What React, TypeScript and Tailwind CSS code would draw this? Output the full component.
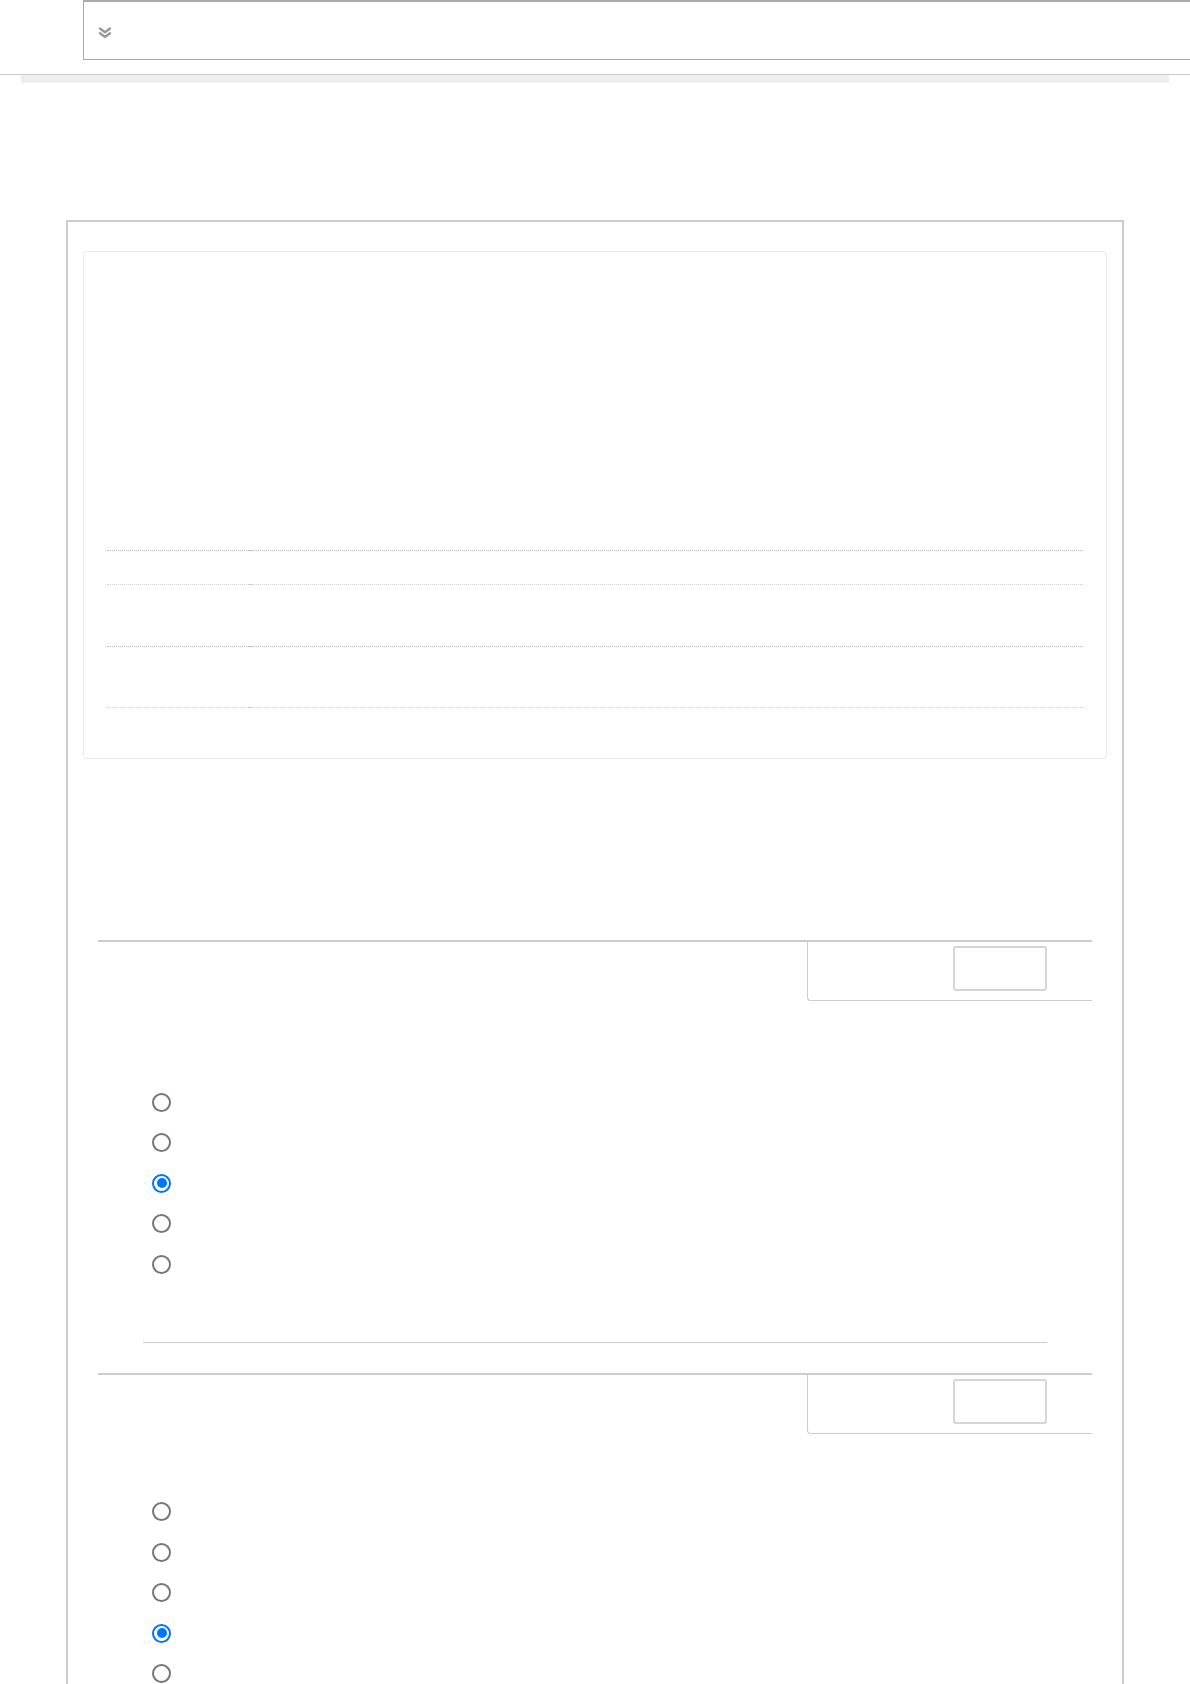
import React from "react";

function Radio({ checked }: { checked?: boolean }) {
  return (
    <div className="h-[40.5px] flex items-center">
      {checked ? (
        <div className="w-[19px] h-[19px] rounded-full border-2 border-[#0075ff] flex items-center justify-center bg-white">
          <div className="w-[10px] h-[10px] rounded-full bg-[#0075ff]" />
        </div>
      ) : (
        <div className="w-[19px] h-[19px] rounded-full border-2 border-[#767676] bg-white" />
      )}
    </div>
  );
}

function SectionHeader() {
  return (
    <div className="flex h-[61px]">
      <div className="flex-1 border-t-2 border-[#cccccc]" />
      <div className="w-[285px] border-t-2 border-l border-b border-[#cccccc] rounded-bl-[4px] pl-[145px] pt-[4px]">
        <div className="w-[94px] h-[45px] border-2 border-[#d6d6d6] rounded-[3px] bg-white" />
      </div>
    </div>
  );
}

function DottedRow({ h, dark }: { h: number; dark?: boolean }) {
  const c = dark ? "border-[#b8b8b8]" : "border-[#cdcdcd]";
  return (
    <div className="flex" style={{ height: h }}>
      <div className={`w-[142px] border-b border-dotted ${c}`} />
      <div className={`w-[2px] border-b ${c}`} />
      <div className={`flex-1 border-b border-dotted ${c}`} />
    </div>
  );
}

export default function App() {
  return (
    <div className="w-[1190px] min-h-[1800px] bg-white overflow-hidden font-['Liberation_Sans',sans-serif]">
      {/* top header */}
      <div className="h-[75px] border-b border-[#cccccc] pl-[83px]">
        <div className="w-[1200px] h-[60px] border-t-2 border-l border-b border-[#aaaaaa] flex items-center pl-[14px] pt-[4px]">
          <svg width="14" height="12" viewBox="0 0 14 12" fill="none" stroke="#999999" strokeWidth="2.4" strokeLinecap="round" strokeLinejoin="round">
            <path d="M2 1.5 L7 5.2 L12 1.5" />
            <path d="M2 6.3 L7 10 L12 6.3" />
          </svg>
        </div>
      </div>
      <div className="mx-[21px] h-[8px] bg-[#eeeeee]" />

      {/* outer box */}
      <div className="mt-[137px] ml-[66px] w-[1058px] border-2 border-b-0 border-[#cccccc] px-[15px] pt-[29px] pb-[200px]">
        {/* inner card */}
        <div className="h-[508px] border border-[#eaeaea] rounded-[4px] px-[23px] pt-[265px]">
          <DottedRow h={34} dark />
          <DottedRow h={34} />
          <DottedRow h={62} dark />
          <DottedRow h={61} />
        </div>

        <div className="mx-[15px] mt-[181px]">
          <SectionHeader />
          <div className="mt-[81px] pl-[54px]">
            <Radio />
            <Radio />
            <Radio checked />
            <Radio />
            <Radio />
          </div>
          <div className="mx-[45px] mt-[57px] border-t border-[#cccccc]" />
          <div className="mt-[30px]">
            <SectionHeader />
          </div>
          <div className="mt-[58px] pl-[54px]">
            <Radio />
            <Radio />
            <Radio />
            <Radio checked />
            <Radio />
          </div>
        </div>
      </div>
    </div>
  );
}
